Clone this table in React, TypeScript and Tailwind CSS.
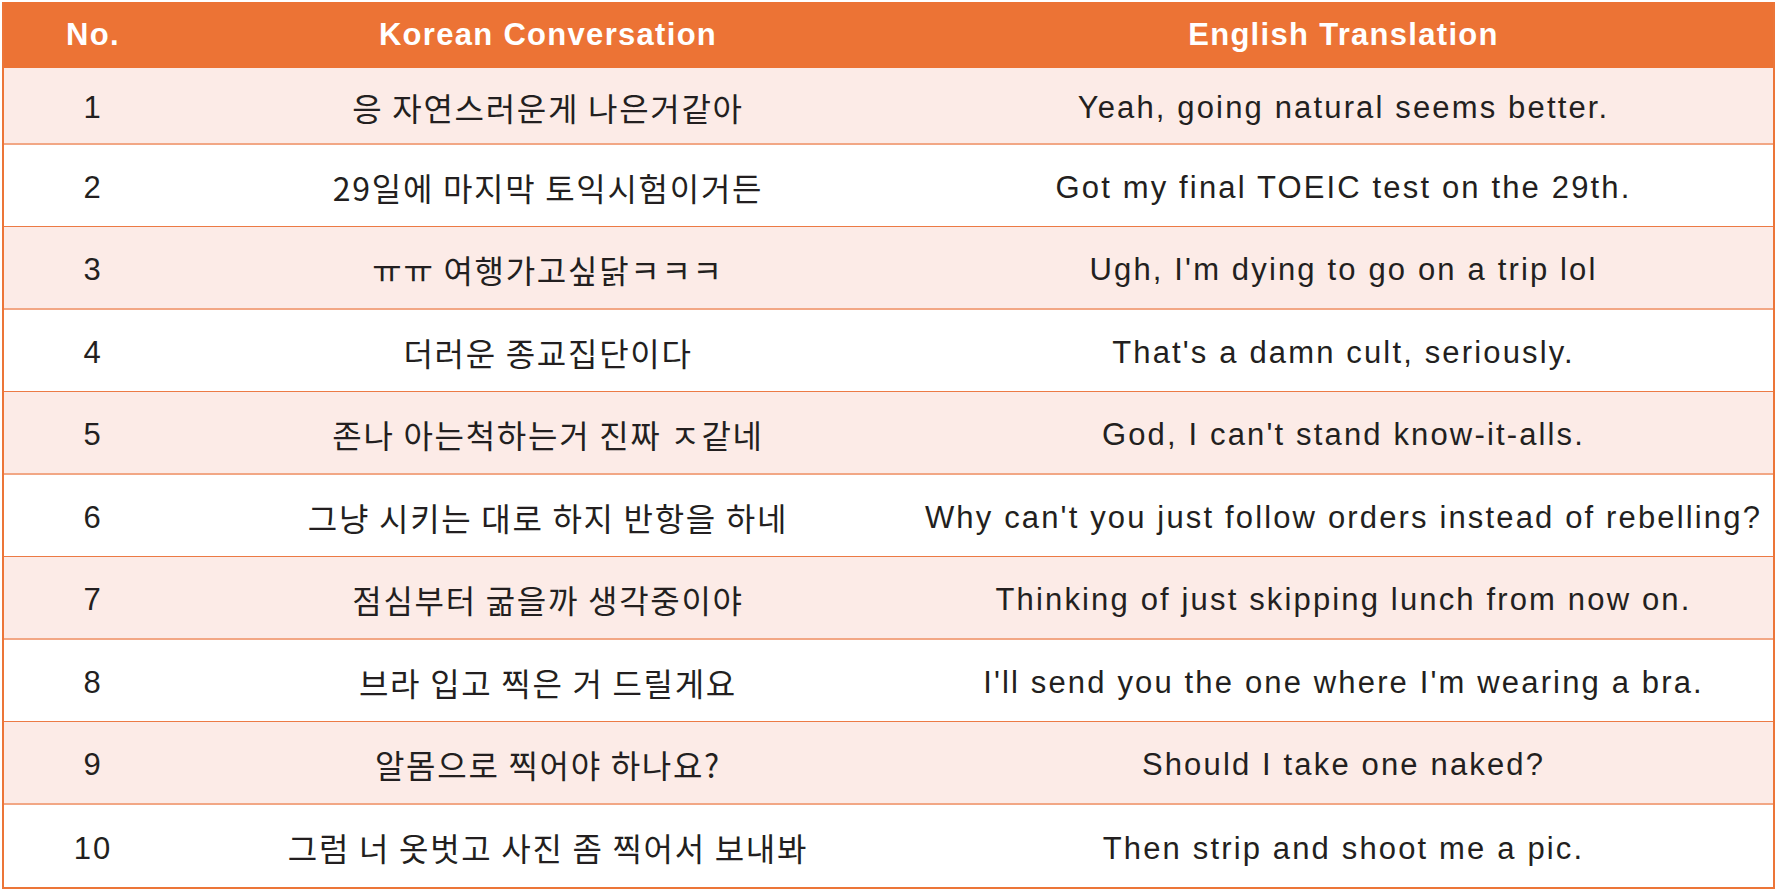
import React from "react";

const rows: { no: string; ko: string; en: string; h: string }[] = [
  { no: "1", ko: "응 자연스러운게 나은거같아", en: "Yeah, going natural seems better.", h: "h-[77px]" },
  { no: "2", ko: "29일에 마지막 토익시험이거든", en: "Got my final TOEIC test on the 29th.", h: "h-[82px]" },
  { no: "3", ko: "ㅠㅠ 여행가고싶닭ㅋㅋㅋ", en: "Ugh, I'm dying to go on a trip lol", h: "h-[83px]" },
  { no: "4", ko: "더러운 종교집단이다", en: "That's a damn cult, seriously.", h: "h-[82px]" },
  { no: "5", ko: "존나 아는척하는거 진짜 ㅈ같네", en: "God, I can't stand know-it-alls.", h: "h-[83px]" },
  { no: "6", ko: "그냥 시키는 대로 하지 반항을 하네", en: "Why can't you just follow orders instead of rebelling?", h: "h-[82px]" },
  { no: "7", ko: "점심부터 굶을까 생각중이야", en: "Thinking of just skipping lunch from now on.", h: "h-[83px]" },
  { no: "8", ko: "브라 입고 찍은 거 드릴게요", en: "I'll send you the one where I'm wearing a bra.", h: "h-[82px]" },
  { no: "9", ko: "알몸으로 찍어야 하나요?", en: "Should I take one naked?", h: "h-[83px]" },
  { no: "10", ko: "그럼 너 옷벗고 사진 좀 찍어서 보내봐", en: "Then strip and shoot me a pic.", h: "h-[82px]" },
];

export default function App() {
  return (
    <div className="w-[1778px] h-[891px] bg-white pl-[2px] pt-[2px]">
      <div className="w-[1773px] border-x-2 border-b-2 border-[#EC7538] font-['Liberation_Sans','Noto_Sans_CJK_KR',sans-serif] text-[#231F20]">
        <div className="flex h-[66px] items-center bg-[#EC7335] text-white font-bold text-[31px] tracking-[1.3px]">
          <div className="w-[178px] text-center">No.</div>
          <div className="w-[732px] text-center">Korean Conversation</div>
          <div className="flex-1 text-center">English Translation</div>
        </div>
        {rows.map((r, i) => {
          const pink = i % 2 === 0;
          const last = i === rows.length - 1;
          return (
            <div
              key={r.no}
              className={`flex items-center pt-[6px] ${r.h} ${pink ? "bg-[#FCEBE7]" : "bg-white"} ${
                last ? "" : pink ? "border-b-2 border-[#F2A785]" : "border-b border-[#EC7A45]"
              }`}
            >
              <div className="w-[178px] text-center text-[31px] tracking-[2px]">{r.no}</div>
              <div className="w-[732px] pb-[4px] text-center text-[32px] tracking-[1.7px] font-['Noto_Sans_CJK_KR',sans-serif]">
                {r.ko}
              </div>
              <div className="flex-1 text-center text-[31px] tracking-[2.15px] whitespace-nowrap">{r.en}</div>
            </div>
          );
        })}
      </div>
    </div>
  );
}
